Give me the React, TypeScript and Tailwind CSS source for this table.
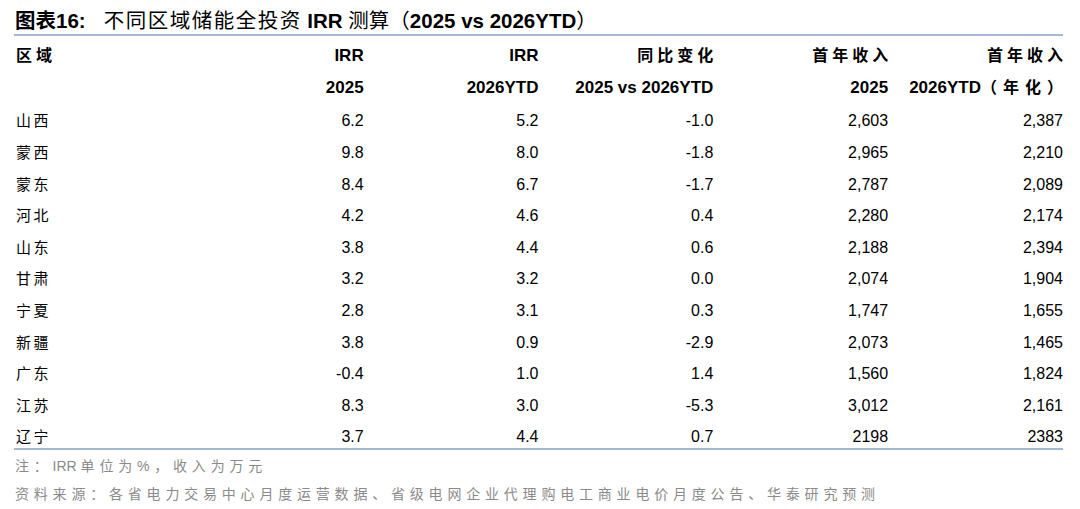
import React from "react";

type Row = [string, string, string, string, string, string];

// IRR (%) and first-year revenue (万元) by region
const ROWS: Row[] = [
  ["山西", "6.2", "5.2", "-1.0", "2,603", "2,387"],
  ["蒙西", "9.8", "8.0", "-1.8", "2,965", "2,210"],
  ["蒙东", "8.4", "6.7", "-1.7", "2,787", "2,089"],
  ["河北", "4.2", "4.6", "0.4", "2,280", "2,174"],
  ["山东", "3.8", "4.4", "0.6", "2,188", "2,394"],
  ["甘肃", "3.2", "3.2", "0.0", "2,074", "1,904"],
  ["宁夏", "2.8", "3.1", "0.3", "1,747", "1,655"],
  ["新疆", "3.8", "0.9", "-2.9", "2,073", "1,465"],
  ["广东", "-0.4", "1.0", "1.4", "1,560", "1,824"],
  ["江苏", "8.3", "3.0", "-5.3", "3,012", "2,161"],
  ["辽宁", "3.7", "4.4", "0.7", "2198", "2383"],
];

function Cjk({ children }: { children: React.ReactNode }) {
  // letter-spaced CJK; negative right margin cancels the trailing gap on right-aligned cells
  return <span className="tracking-[4px] mr-[-4px]">{children}</span>;
}

export default function App() {
  return (
    <div className="w-[1080px] h-[509px] bg-white text-black font-['Liberation_Sans','Noto_Sans_CJK_SC',sans-serif] overflow-hidden">
      <div className="ml-[14px] w-[1049px]">
        {/* Title */}
        <div className="h-[34px] pt-[8px] pl-[1px] text-[20.5px] leading-[26px] whitespace-nowrap">
          <span className="font-bold">图表16:</span>
          <span className="inline-block w-[18px]" />
          <span className="tracking-[1.5px]">不同区域储能全投资</span>
          <span className="font-bold"> IRR </span>
          <span>测算（</span>
          <span className="font-bold">2025 vs 2026YTD</span>
          <span>）</span>
        </div>
        <div className="h-[2px] bg-[#a3b8d8]" />

        {/* Header */}
        <div className="mt-[4.3px] text-[17px] font-bold leading-[31.6px]">
          <div className="grid grid-cols-6 h-[31.6px]">
            <div className="pl-[2px] text-[16px] tracking-[4px]">区域</div>
            <div className="text-right">IRR</div>
            <div className="text-right">IRR</div>
            <div className="text-right text-[16px]">
              <Cjk>同比变化</Cjk>
            </div>
            <div className="text-right text-[16px]">
              <Cjk>首年收入</Cjk>
            </div>
            <div className="text-right text-[16px]">
              <Cjk>首年收入</Cjk>
            </div>
          </div>
          <div className="grid grid-cols-6 h-[31.6px]">
            <div />
            <div className="text-right">2025</div>
            <div className="text-right">2026YTD</div>
            <div className="text-right">2025 vs 2026YTD</div>
            <div className="text-right">2025</div>
            <div className="text-right whitespace-nowrap">
              2026YTD
              <span className="text-[16px] tracking-[6px] mr-[-6px]">（年化）</span>
            </div>
          </div>
        </div>

        {/* Body */}
        <div className="mt-[2.1px] text-[16px] leading-[22px]">
          {ROWS.map((r, i) => (
            <div
              key={r[0]}
              className={
                "grid grid-cols-6 pt-[4.8px] " + (i === ROWS.length - 1 ? "pb-0" : "pb-[4.8px]")
              }
            >
              <div className="pl-[2px] text-[15px] tracking-[2.5px]">{r[0]}</div>
              {r.slice(1).map((v, j) => (
                <div key={j} className="text-right">
                  {v}
                </div>
              ))}
            </div>
          ))}
        </div>
        <div className="h-[2px] bg-[#a3b8d8]" />
      </div>

      {/* Notes */}
      <div className="ml-[15px] mt-[1.5px] text-[14px] leading-[28px] tracking-[4.8px] text-[#8a8a8a] whitespace-nowrap">
        <div>
          注：<span className="tracking-normal">IRR </span>单位为%，收入为万元
        </div>
        <div>资料来源：各省电力交易中心月度运营数据、省级电网企业代理购电工商业电价月度公告、华泰研究预测</div>
      </div>
    </div>
  );
}
